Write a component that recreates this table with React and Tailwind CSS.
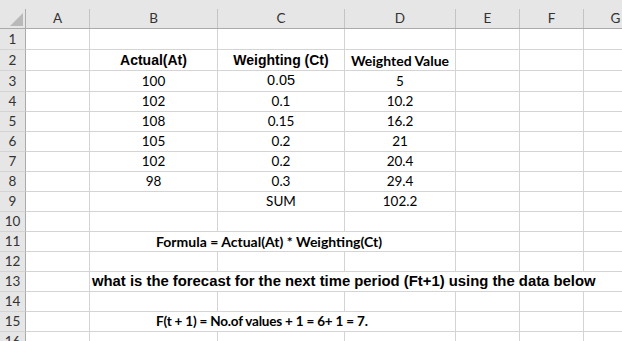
import React from 'react';

const cols = [
  { k: 'A', w: 64 },
  { k: 'B', w: 128 },
  { k: 'C', w: 127 },
  { k: 'D', w: 111 },
  { k: 'E', w: 64 },
  { k: 'F', w: 64 },
  { k: 'G', w: 64 },
];

const calibri = "font-['Lato',sans-serif]";
const arial = "font-['Liberation_Sans',Arial,sans-serif]";

// cells: { from, span, text, cls }
const rows = [
  { n: 1, h: 21, cells: [] },
  {
    n: 2,
    h: 21,
    cells: [
      { from: 1, text: 'Actual(At)', cls: `${arial} font-bold text-[14px] justify-center` },
      { from: 2, text: 'Weighting (Ct)', cls: `${arial} font-bold text-[14px] justify-center` },
      { from: 3, text: 'Weighted Value', cls: `${calibri} font-bold text-[14px] justify-center` },
    ],
  },
  { n: 3, h: 21, data: ['100', '0.05', '5'] },
  { n: 4, h: 20, data: ['102', '0.1', '10.2'] },
  { n: 5, h: 20, data: ['108', '0.15', '16.2'] },
  { n: 6, h: 20, data: ['105', '0.2', '21'] },
  { n: 7, h: 20, data: ['102', '0.2', '20.4'] },
  { n: 8, h: 20, data: ['98', '0.3', '29.4'] },
  { n: 9, h: 20, data: ['', 'SUM', '102.2'] },
  { n: 10, h: 20, cells: [] },
  {
    n: 11,
    h: 20,
    cells: [
      { from: 1, span: 3, text: 'Formula = Actual(At) * Weighting(Ct)', cls: `${calibri} font-bold text-[14px] pl-[66px]` },
    ],
  },
  { n: 12, h: 20, cells: [] },
  {
    n: 13,
    h: 20,
    cells: [
      {
        from: 1,
        span: 6,
        text: 'what is the forecast for the next time period (Ft+1) using the data below',
        cls: `${arial} font-bold text-[14.85px] pl-[2px]`,
      },
    ],
  },
  { n: 14, h: 20, cells: [] },
  {
    n: 15,
    h: 20,
    cells: [
      {
        from: 1,
        span: 3,
        text: 'F(t + 1) = No.of values + 1 = 6+ 1 = 7.',
        cls: `${calibri} font-bold text-[13.5px] tracking-[-0.2px] pl-[66px]`,
      },
    ],
  },
  { n: 16, h: 20, cells: [] },
];

const buildCells = (row) => {
  let cells = row.cells;
  if (row.data) {
    cells = row.data.map((t, i) => ({
      from: i + 1,
      text: t,
      cls:
        row.n === 3 && i === 1
          ? `${arial} text-[14.5px] justify-center`
          : `${calibri} text-[13.5px] justify-center`,
    }));
  }
  const out = [];
  let c = 0;
  while (c < cols.length) {
    const cell = cells.find((x) => x.from === c);
    if (cell) {
      const span = cell.span || 1;
      const w = cols.slice(c, c + span).reduce((s, x) => s + x.w, 0);
      out.push({ w, text: cell.text, cls: cell.cls, key: c });
      c += span;
    } else {
      out.push({ w: cols[c].w, text: '', cls: '', key: c });
      c += 1;
    }
  }
  return out;
};

const Row = ({ row }) => {
  const cells = buildCells(row);
  return (
    <div className="flex shrink-0" style={{ height: row.h }}>
      <div className={`${calibri} w-[26px] shrink-0 flex items-center justify-center border-r border-b border-r-[#ababab] border-b-[#d4d4d4] bg-[#e6e6e6] text-[13.5px] text-[#333]`}>
        {row.n}
      </div>
      {cells.map((cell) => (
        <div
          key={cell.key}
          className={`shrink-0 flex items-center whitespace-nowrap border-r border-b border-[#d4d4d4] text-black ${cell.cls}`}
          style={{ width: cell.w }}
        >
          {cell.text}
        </div>
      ))}
    </div>
  );
};

const App = () => {
  return (
    <div className="w-[622px] h-[341px] overflow-hidden bg-white flex flex-col">
      <div className="h-[9px] bg-[#e6e6e6] shrink-0" />
      <div className="flex h-[20px] shrink-0 bg-[#e6e6e6] border-b border-[#ababab]">
        <div className="w-[26px] shrink-0 relative border-r border-[#ababab]">
          <svg className="absolute left-[10px] top-[4px]" width="13" height="13" viewBox="0 0 13 13">
            <polygon points="13,0 13,13 0,13" fill="#b9b9b9" />
          </svg>
        </div>
        {cols.map((c) => (
          <div
            key={c.k}
            className={`${calibri} shrink-0 flex items-center justify-center border-r border-[#c4c4c4] text-[13.5px] text-[#333]`}
            style={{ width: c.w }}
          >
            {c.k}
          </div>
        ))}
      </div>
      {rows.map((r) => (
        <Row key={r.n} row={r} />
      ))}
    </div>
  );
};

export default App;
